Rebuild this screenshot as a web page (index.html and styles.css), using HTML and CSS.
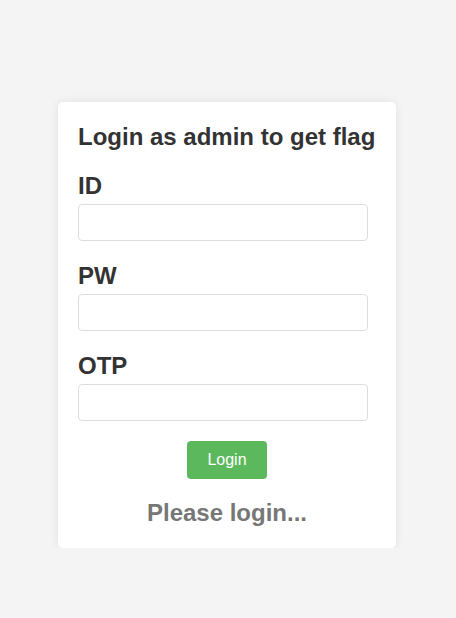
FILE: index.html
```html
<!DOCTYPE html>
<html>
<head>
<meta charset="utf-8">
<link rel="stylesheet" href="styles.css">
</head>
<body>
<div class="card">
  <h2 class="title">Login as admin to get flag</h2>
  <label class="label">ID</label>
  <input class="field" type="text">
  <label class="label">PW</label>
  <input class="field" type="password">
  <label class="label">OTP</label>
  <input class="field last" type="text">
  <div class="actions"><button class="btn">Login</button></div>
  <div class="status">Please login...</div>
</div>
</body>
</html>
```
FILE: styles.css
```css
html, body {
  margin: 0;
  padding: 0;
}
body {
  background: #f4f4f4;
  font-family: "Liberation Sans", Arial, sans-serif;
  color: #333;
  padding-top: 102px;
  padding-right: 2px;
}
.card {
  width: 298px;
  margin: 0 auto;
  background: #fff;
  border-radius: 5px;
  box-shadow: 0 0 10px rgba(0,0,0,0.08);
  padding: 21px 20px 21px 20px;
  display: flex;
  flex-direction: column;
}
.title {
  margin: 0 0 21px 0;
  font-size: 24px;
  line-height: 28px;
  font-weight: bold;
  color: #333;
  white-space: nowrap;
}
.label {
  display: block;
  font-size: 24px;
  line-height: 28px;
  font-weight: bold;
  color: #333;
  margin-bottom: 4px;
}
.field {
  box-sizing: border-box;
  width: 290px;
  height: 37px;
  margin: 0 0 21px 0;
  border: 1px solid #ddd;
  border-radius: 4px;
  padding: 0 8px;
  font-size: 16px;
  background: #fff;
}
.field.last {
  margin-bottom: 20px;
}
.actions {
  display: flex;
  justify-content: center;
  width: 298px;
  margin-bottom: 20px;
}
.btn {
  width: 80px;
  height: 38px;
  background: #5cb85c;
  color: #fff;
  border: none;
  border-radius: 4px;
  font-family: "Liberation Sans", Arial, sans-serif;
  font-size: 16px;
  padding: 0;
}
.status {
  text-align: center;
  font-size: 24px;
  line-height: 28px;
  font-weight: bold;
  color: #777;
}
```
